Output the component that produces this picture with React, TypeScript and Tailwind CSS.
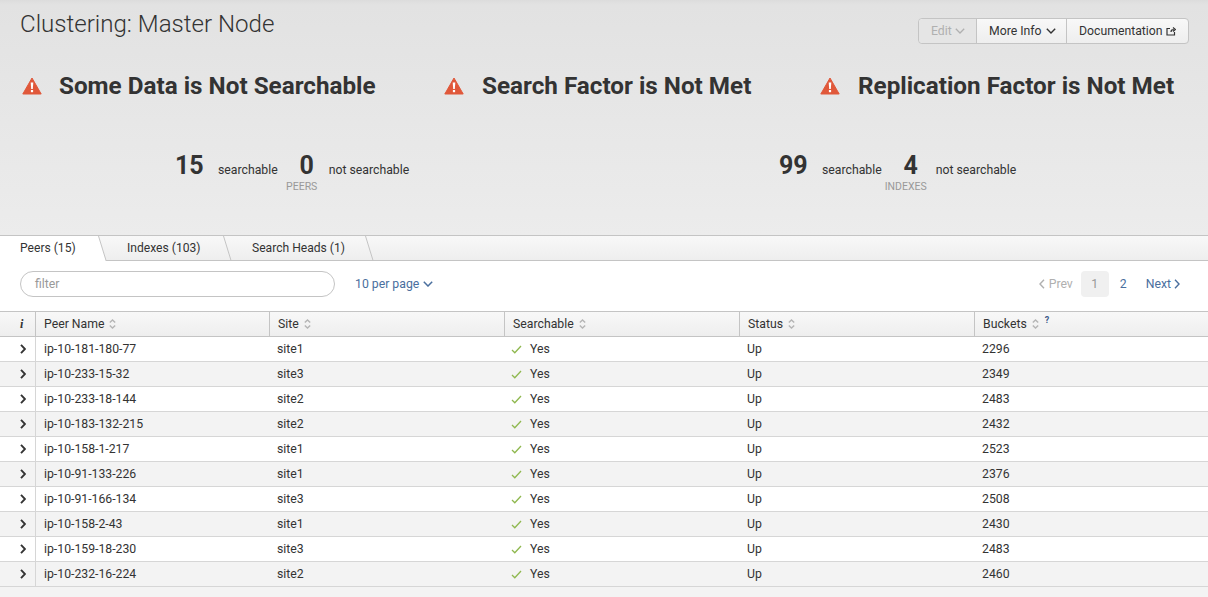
const rows = [
  ["ip-10-181-180-77", "site1", "2296"],
  ["ip-10-233-15-32", "site3", "2349"],
  ["ip-10-233-18-144", "site2", "2483"],
  ["ip-10-183-132-215", "site2", "2432"],
  ["ip-10-158-1-217", "site1", "2523"],
  ["ip-10-91-133-226", "site1", "2376"],
  ["ip-10-91-166-134", "site3", "2508"],
  ["ip-10-158-2-43", "site1", "2430"],
  ["ip-10-159-18-230", "site3", "2483"],
  ["ip-10-232-16-224", "site2", "2460"],
];

const Warn = () => (
  <svg width="20" height="18" viewBox="0 0 20 18" className="shrink-0">
    <path d="M10 1 L19.2 17 L0.8 17 Z" fill="#e0583a" stroke="#e0583a" strokeWidth="1" strokeLinejoin="round" />
    <path d="M8.7 5.5 H11.3 L10.8 12 H9.2 Z" fill="#fff" />
    <rect x="8.9" y="13" width="2.2" height="2.2" fill="#fff" />
  </svg>
);

const Sort = () => (
  <svg width="7" height="10" viewBox="0 0 7 10" className="ml-[5px] shrink-0">
    <path d="M0.8 3.6 L3.5 1 L6.2 3.6 M0.8 6.4 L3.5 9 L6.2 6.4" fill="none" stroke="#b5b5b5" strokeWidth="1.4" />
  </svg>
);

const Down = ({ sw = 1.3, className = "" }: { sw?: number; className?: string }) => (
  <svg width="10" height="6" viewBox="0 0 10 6" className={`shrink-0 ${className}`}>
    <path d="M0.8 0.8 L5 5 L9.2 0.8" fill="none" stroke="currentColor" strokeWidth={sw} />
  </svg>
);

const Side = ({ left, sw = 1.4, className = "" }: { left?: boolean; sw?: number; className?: string }) => (
  <svg width="6" height="10" viewBox="0 0 6 10" className={`shrink-0 ${className}`}>
    <path d={left ? "M5 0.8 L1 5 L5 9.2" : "M1 0.8 L5 5 L1 9.2"} fill="none" stroke="currentColor" strokeWidth={sw} />
  </svg>
);

const Slant = ({ active }: { active?: boolean }) => (
  <svg width="9" height="25" viewBox="0 0 9 25" className="shrink-0 self-start">
    {active && <path d="M0 0 L0.5 0 L8.2 25 L0 25 Z" fill="#fff" />}
    <path d="M0.5 0 L8.2 25" fill="none" stroke="#c4c4c4" strokeWidth="1" />
  </svg>
);

const Alert = ({ text, className, gap }: { text: string; className: string; gap: string }) => (
  <div className={`flex items-center ${className}`}>
    <Warn />
    <span className={`text-[24.25px] font-bold text-[#333] leading-none whitespace-nowrap ${gap}`}>{text}</span>
  </div>
);

const Stat = ({ a, b, label, className, gap }: { a: string; b: string; label: string; className: string; gap: string }) => (
  <div className={`flex items-start ${className}`}>
    <span className="text-[25px] font-bold text-[#333] leading-[30px] w-[28px]">{a}</span>
    <span className="text-[12.25px] text-[#333] mt-[10px] leading-[18px] ml-[15px]">searchable</span>
    <div className="flex flex-col items-center w-[16px] ml-[21px]">
      <span className="text-[25px] font-bold text-[#333] leading-[30px]">{b}</span>
      <span className="text-[10.5px] text-[#999] leading-[12px] whitespace-nowrap -translate-x-[5px]">{label}</span>
    </div>
    <span className={`text-[12.25px] text-[#333] mt-[10px] leading-[18px] ${gap}`}>not searchable</span>
  </div>
);

const Head = ({ label, w, extra }: { label: string; w: string; extra?: boolean }) => (
  <div className={`flex items-center h-full pl-2 border-l border-[#c4c4c4] ${w}`}>
    <span>{label}</span>
    <Sort />
    {extra && <span className="text-[9px] font-bold text-[#3c5a8a] ml-[6px] mb-[6px]">?</span>}
  </div>
);

export default function App() {
  return (
    <div className="w-[1208px] h-[597px] overflow-hidden bg-[#f3f3f3] text-[12.25px] text-[#333] font-['Roboto',sans-serif]">
      <div className="h-[235px] bg-gradient-to-b from-[#dcdcdc] via-[#e2e2e2] via-[2%] to-[#ececec] px-5 pt-[10px]">
        <div className="flex justify-between">
          <h1 className="text-[24.1px] font-light leading-[29px] text-[#333]">Clustering: Master Node</h1>
          <div className="flex h-[26px] mt-2 mr-[-1px] rounded-[4px] border border-[#c4c4c4] bg-gradient-to-b from-[#f8f8f8] to-[#eeeeee]">
            <div className="flex items-center w-[57px] pl-3 bg-[#e5e5e5] text-[#b0b0b0] rounded-l-[4px]">
              Edit <Down className="ml-[3px]" />
            </div>
            <div className="flex items-center w-[90px] pl-3 border-l border-[#c4c4c4]">
              More Info <Down className="ml-[4px]" sw={1.4} />
            </div>
            <div className="flex items-center w-[122px] pl-3 border-l border-[#c4c4c4]">
              Documentation
              <svg width="10" height="9" viewBox="0 0 10 9" className="ml-[3px]">
                <path d="M4 1.5 H1 V8 H8.5 V5 M5 5 C5 3 6 2.5 8 2.5 M7 0.5 L9.5 2.5 L7 4.5" fill="none" stroke="#333" strokeWidth="1.2" />
              </svg>
            </div>
          </div>
        </div>
        <div className="flex mt-[30px] ml-[2px]">
          <Alert text="Some Data is Not Searchable" className="w-[423px]" gap="ml-[17px]" />
          <Alert text="Search Factor is Not Met" className="w-[376px] -ml-[1px]" gap="ml-[18px]" />
          <Alert text="Replication Factor is Not Met" className="" gap="ml-[18px]" />
        </div>
        <div className="flex mt-[53px]">
          <Stat a="15" b="0" label="PEERS" className="ml-[155px] w-[604px]" gap="ml-[14px]" />
          <Stat a="99" b="4" label="INDEXES" className="" gap="ml-[17px]" />
        </div>
      </div>

      <div className="h-[26px] flex text-[12.1px] border-y border-[#c4c4c4] bg-gradient-to-b from-[#f8f8f8] to-[#eeeeee]">
        <div className="flex items-center w-[98px] pl-5 pb-[1px] bg-white h-[25px] shrink-0">Peers (15)</div>
        <Slant active />
        <div className="flex items-center w-[116px] pl-5 shrink-0">Indexes (103)</div>
        <Slant />
        <div className="flex items-center w-[133px] pl-5 shrink-0 whitespace-nowrap">Search Heads (1)</div>
        <Slant />
      </div>

      <div className="h-[50px] bg-white flex items-start pt-[10px] pl-5 pr-[28px]">
        <div className="w-[315px] h-[26px] rounded-full border border-[#c4c4c4] flex items-center pl-[14px] text-[#999]">filter</div>
        <div className="flex items-center h-[26px] ml-5 text-[#4a6f9e]">
          10 per page <Down className="ml-[4px]" sw={1.5} />
        </div>
        <div className="flex items-center h-[26px] ml-auto">
          <span className="flex items-center text-[#b0b0b0]">
            <Side left className="mr-[4px]" />Prev
          </span>
          <span className="w-[28px] h-[26px] ml-[8px] rounded-[4px] bg-[#f0f0f0] text-[#999] flex items-center justify-center">1</span>
          <span className="ml-[11px] text-[#4a6f9e]">2</span>
          <span className="flex items-center ml-[19px] text-[#4a6f9e]">
            Next<Side className="ml-[3px]" />
          </span>
        </div>
      </div>

      <div className="h-[26px] flex items-center border-y border-[#c4c4c4] bg-gradient-to-b from-[#f8f8f8] to-[#eeeeee]">
        <div className="w-[35px] pl-[20px] font-bold italic font-['Liberation_Serif',serif]">i</div>
        <Head label="Peer Name" w="w-[234px]" />
        <Head label="Site" w="w-[235px]" />
        <Head label="Searchable" w="w-[235px]" />
        <Head label="Status" w="w-[235px]" />
        <Head label="Buckets" w="w-[234px]" extra />
      </div>

      {rows.map((r, i) => (
        <div
          key={r[0]}
          className={`h-[25px] flex items-center border-b border-[#d6d6d6] ${i % 2 === 0 ? "bg-white" : "bg-[#f3f3f3]"}`}
        >
          <div className="w-[35px] flex pl-[20px] text-[#333]">
            <Side sw={1.9} />
          </div>
          <div className="w-[234px] h-full flex items-center pl-2 border-l border-[#d6d6d6]">{r[0]}</div>
          <div className="w-[235px] pl-2">{r[1]}</div>
          <div className="w-[235px] pl-[7px] flex items-center">
            <svg width="11" height="9" viewBox="0 0 11 9" className="shrink-0">
              <path d="M1 5 L3.8 7.8 L10 1" fill="none" stroke="#8fb84f" strokeWidth="1.3" />
            </svg>
            <span className="ml-[8px]">Yes</span>
          </div>
          <div className="w-[235px] pl-2">Up</div>
          <div className="w-[234px] pl-2">{r[2]}</div>
        </div>
      ))}
    </div>
  );
}
